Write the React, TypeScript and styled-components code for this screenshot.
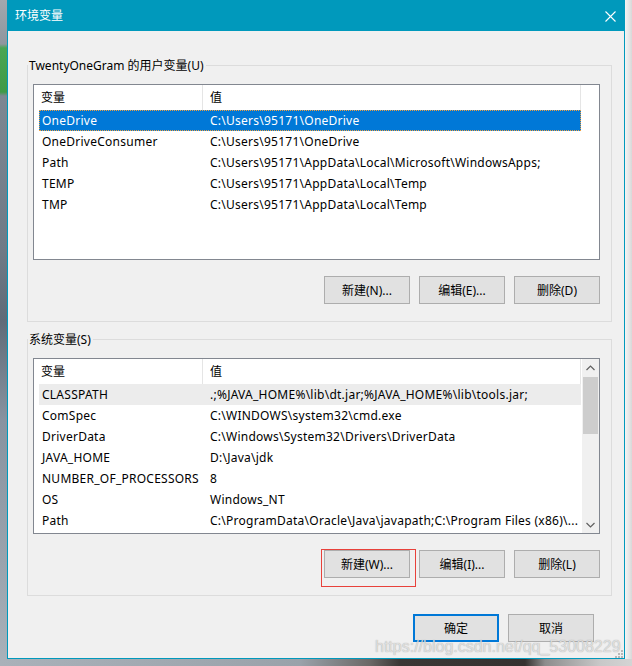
import * as React from 'react';
import styled, { createGlobalStyle } from 'styled-components';

type EnvVar = { name: string; value: string };

const USER_VARS: EnvVar[] = [
  { name: 'OneDrive', value: 'C:\\Users\\95171\\OneDrive' },
  { name: 'OneDriveConsumer', value: 'C:\\Users\\95171\\OneDrive' },
  { name: 'Path', value: 'C:\\Users\\95171\\AppData\\Local\\Microsoft\\WindowsApps;' },
  { name: 'TEMP', value: 'C:\\Users\\95171\\AppData\\Local\\Temp' },
  { name: 'TMP', value: 'C:\\Users\\95171\\AppData\\Local\\Temp' },
];

const SYSTEM_VARS: EnvVar[] = [
  { name: 'CLASSPATH', value: '.;%JAVA_HOME%\\lib\\dt.jar;%JAVA_HOME%\\lib\\tools.jar;' },
  { name: 'ComSpec', value: 'C:\\WINDOWS\\system32\\cmd.exe' },
  { name: 'DriverData', value: 'C:\\Windows\\System32\\Drivers\\DriverData' },
  { name: 'JAVA_HOME', value: 'D:\\Java\\jdk' },
  { name: 'NUMBER_OF_PROCESSORS', value: '8' },
  { name: 'OS', value: 'Windows_NT' },
  { name: 'Path', value: 'C:\\ProgramData\\Oracle\\Java\\javapath;C:\\Program Files (x86)\\...' },
];

const ACCENT = '#0099bc';

const GlobalStyle = createGlobalStyle`
  html, body {
    margin: 0;
    padding: 0;
  }
  body {
    width: 632px;
    height: 666px;
    overflow: hidden;
    font-family: "Noto Sans", "Noto Sans CJK SC", sans-serif;
    font-size: 12px;
    color: #000;
  }
`;

const App: React.FC = () => (
  <Desktop>
    <GlobalStyle />
    <Middle>
      <LeftStrip />
      <Dialog>
        <TitleBar>
          <Title>环境变量</Title>
          <CloseIcon width="11" height="11" viewBox="0 0 11 11">
            <path d="M0.5 0.5 L10.5 10.5 M10.5 0.5 L0.5 10.5" stroke="#fff" strokeWidth="1.1" />
          </CloseIcon>
        </TitleBar>
        <Body>
          <Group>
            <Legend>TwentyOneGram 的用户变量(U)</Legend>
            <VarList rows={USER_VARS} selected={0} focused />
            <ButtonRow>
              <Button>新建(N)...</Button>
              <Button>编辑(E)...</Button>
              <Button>删除(D)</Button>
            </ButtonRow>
          </Group>
          <Group second>
            <Legend>系统变量(S)</Legend>
            <VarList rows={SYSTEM_VARS} selected={0} scroll />
            <ButtonRow>
              <Marked>
                <Button>新建(W)...</Button>
                <RedBox />
              </Marked>
              <Button>编辑(I)...</Button>
              <Button>删除(L)</Button>
            </ButtonRow>
          </Group>
          <Footer>
            <Button primary>确定</Button>
            <Button>取消</Button>
          </Footer>
          <GripRow>
            <svg width="8" height="8" viewBox="0 0 8 8">
              {[
                [6, 0], [6, 3], [3, 3], [6, 6], [3, 6], [0, 6],
              ].map(([x, y], i) => (
                <rect key={i} x={x} y={y} width="2" height="2" fill="#b8b8b8" />
              ))}
            </svg>
          </GripRow>
        </Body>
      </Dialog>
      <RightStrip />
    </Middle>
    <BottomStrip />
    <Watermark>https://blog.csdn.net/qq_53008229</Watermark>
  </Desktop>
);

const VarList: React.FC<{
  rows: EnvVar[],
  selected: number,
  focused?: boolean,
  scroll?: boolean,
}> = ({
  rows,
  selected,
  focused,
  scroll,
}) => (
  <ListBox>
    <ListMain>
      <Header>
        <HeaderCell width={169}>变量</HeaderCell>
        <HeaderCell width={378}>值</HeaderCell>
      </Header>
      {rows.map((row, i) => (
        <Row key={row.name + i} selected={i === selected} focused={focused}>
          <NameCell>{row.name}</NameCell>
          <ValueCell>{row.value}</ValueCell>
        </Row>
      ))}
    </ListMain>
    {scroll && (
      <ScrollBar>
        <ArrowButton>
          <svg width="9" height="6" viewBox="0 0 9 6">
            <path d="M0.5 5 L4.5 1 L8.5 5" fill="none" stroke="#606060" strokeWidth="1.2" />
          </svg>
        </ArrowButton>
        <Thumb />
        <Track />
        <ArrowButton>
          <svg width="9" height="6" viewBox="0 0 9 6">
            <path d="M0.5 1 L4.5 5 L8.5 1" fill="none" stroke="#606060" strokeWidth="1.2" />
          </svg>
        </ArrowButton>
      </ScrollBar>
    )}
  </ListBox>
);

const Desktop = styled.div`
  position: relative;
  width: 632px;
  height: 666px;
  display: flex;
  flex-direction: column;
  overflow: hidden;
`;

const Middle = styled.div`
  display: flex;
  height: 659px;
`;

const LeftStrip = styled.div`
  width: 7px;
  background: linear-gradient(
    to bottom,
    #a2a8ae 0px,
    #8f969e 44px,
    #4aa553 48px,
    #3f9a47 92px,
    #7d8792 96px,
    #6f7a86 250px,
    #5f6b78 320px,
    #8893a0 420px,
    #9aa3ad 560px,
    #a9b1b9 659px
  );
`;

const RightStrip = styled.div`
  width: 7px;
  background: linear-gradient(to right, #f4f4f4 0px, #e6e6e6 4px, #d8d8d8 7px);
`;

const BottomStrip = styled.div`
  height: 7px;
  background: linear-gradient(
    to right,
    #a9b1b9 0px,
    #9aa2aa 300px,
    #6a6866 370px,
    #3a3735 400px,
    #34312f 525px,
    #8c8c8c 545px,
    #c8c8c8 600px,
    #d4d4d4 632px
  );
`;

const Dialog = styled.div`
  box-sizing: border-box;
  width: 618px;
  height: 659px;
  display: flex;
  flex-direction: column;
  background: #f0f0f0;
  border: 1px solid ${ACCENT};
  border-top: none;
`;

const TitleBar = styled.div`
  height: 31px;
  flex: 0 0 auto;
  display: flex;
  align-items: center;
  justify-content: space-between;
  padding: 0 9px 0 7px;
  margin: 0 -1px;
  background: ${ACCENT};
`;

const Title = styled.div`
  color: #fff;
  font-size: 12px;
  line-height: 16px;
  padding-left: 1px;
`;

const CloseIcon = styled.svg`
  display: block;
  margin-top: 1px;
`;

const Body = styled.div`
  flex: 1 1 auto;
  display: flex;
  flex-direction: column;
  padding: 34px 12px 0 19px;
`;

const Group = styled.div<{ second?: boolean }>`
  border: 1px solid #dcdcdc;
  padding: 0 11px 17px 5px;
  margin-top: ${props => (props.second ? 17 : 0)}px;
  display: flex;
  flex-direction: column;
`;

const Legend = styled.div`
  align-self: flex-start;
  margin: -9px 0 0 -5px;
  padding: 0 2px 0 1px;
  background: #f0f0f0;
  line-height: 18px;
  font-size: 12px;
  white-space: nowrap;
`;

const ListBox = styled.div`
  box-sizing: border-box;
  margin-top: 9px;
  height: 176px;
  border: 1px solid #828790;
  background: #fff;
  display: flex;
  overflow: hidden;
`;

const ListMain = styled.div`
  flex: 1 1 auto;
  display: flex;
  flex-direction: column;
`;

const Header = styled.div`
  display: flex;
  height: 25px;
  flex: 0 0 auto;
`;

const HeaderCell = styled.div<{ width: number }>`
  box-sizing: border-box;
  width: ${props => props.width}px;
  padding-left: 7px;
  border-right: 1px solid #e5e5e5;
  line-height: 25px;
  white-space: nowrap;
`;

const Row = styled.div<{ selected?: boolean, focused?: boolean }>`
  display: flex;
  width: 542px;
  height: 21px;
  margin-left: 5px;
  flex: 0 0 auto;
  line-height: 21px;
  white-space: nowrap;
  letter-spacing: 0.25px;
  background: ${props => (props.selected ? (props.focused ? '#0078d7' : '#ececec') : 'transparent')};
  color: ${props => (props.selected && props.focused ? '#fff' : '#000')};
  outline: ${props => (props.selected && props.focused ? '1px dotted #f0a040' : 'none')};
  outline-offset: -1px;
`;

const NameCell = styled.div`
  box-sizing: border-box;
  width: 163px;
  padding-left: 3px;
  overflow: hidden;
`;

const ValueCell = styled.div`
  flex: 1 1 auto;
  padding-left: 8px;
  overflow: hidden;
`;

const ScrollBar = styled.div`
  width: 17px;
  flex: 0 0 auto;
  display: flex;
  flex-direction: column;
  background: #f0f0f0;
`;

const ArrowButton = styled.div`
  height: 17px;
  flex: 0 0 auto;
  display: flex;
  align-items: center;
  justify-content: center;
`;

const Thumb = styled.div`
  height: 57px;
  margin: 1px 1px 0;
  background: #cdcdcd;
`;

const Track = styled.div`
  flex: 1 1 auto;
`;

const ButtonRow = styled.div`
  display: flex;
  justify-content: flex-end;
  gap: 9px;
  margin-top: 16px;
`;

const Button = styled.div<{ primary?: boolean }>`
  box-sizing: border-box;
  width: 86px;
  height: 28px;
  display: flex;
  align-items: center;
  justify-content: center;
  background: #e1e1e1;
  border: ${props => (props.primary ? '2px solid #0078d7' : '1px solid #adadad')};
  font-size: 12px;
  white-space: nowrap;
`;

const Marked = styled.div`
  position: relative;
`;

const RedBox = styled.div`
  position: absolute;
  top: -1px;
  left: -3px;
  right: -6px;
  bottom: -9px;
  border: 1px solid #e8413b;
  pointer-events: none;
`;

const Footer = styled.div`
  display: flex;
  justify-content: flex-end;
  gap: 9px;
  margin-top: 18px;
  padding-right: 18px;
`;

const GripRow = styled.div`
  display: flex;
  justify-content: flex-end;
  margin: 8px -11px 0 0;

  svg {
    display: block;
  }
`;

const Watermark = styled.div`
  position: absolute;
  left: 375px;
  top: 637px;
  font-family: "Liberation Sans", Arial, sans-serif;
  font-size: 16px;
  line-height: 20px;
  color: rgba(232, 232, 232, 0.85);
  text-shadow: 0 0 1px rgba(90, 90, 90, 0.55);
  white-space: nowrap;
  pointer-events: none;
`;

export default App;
